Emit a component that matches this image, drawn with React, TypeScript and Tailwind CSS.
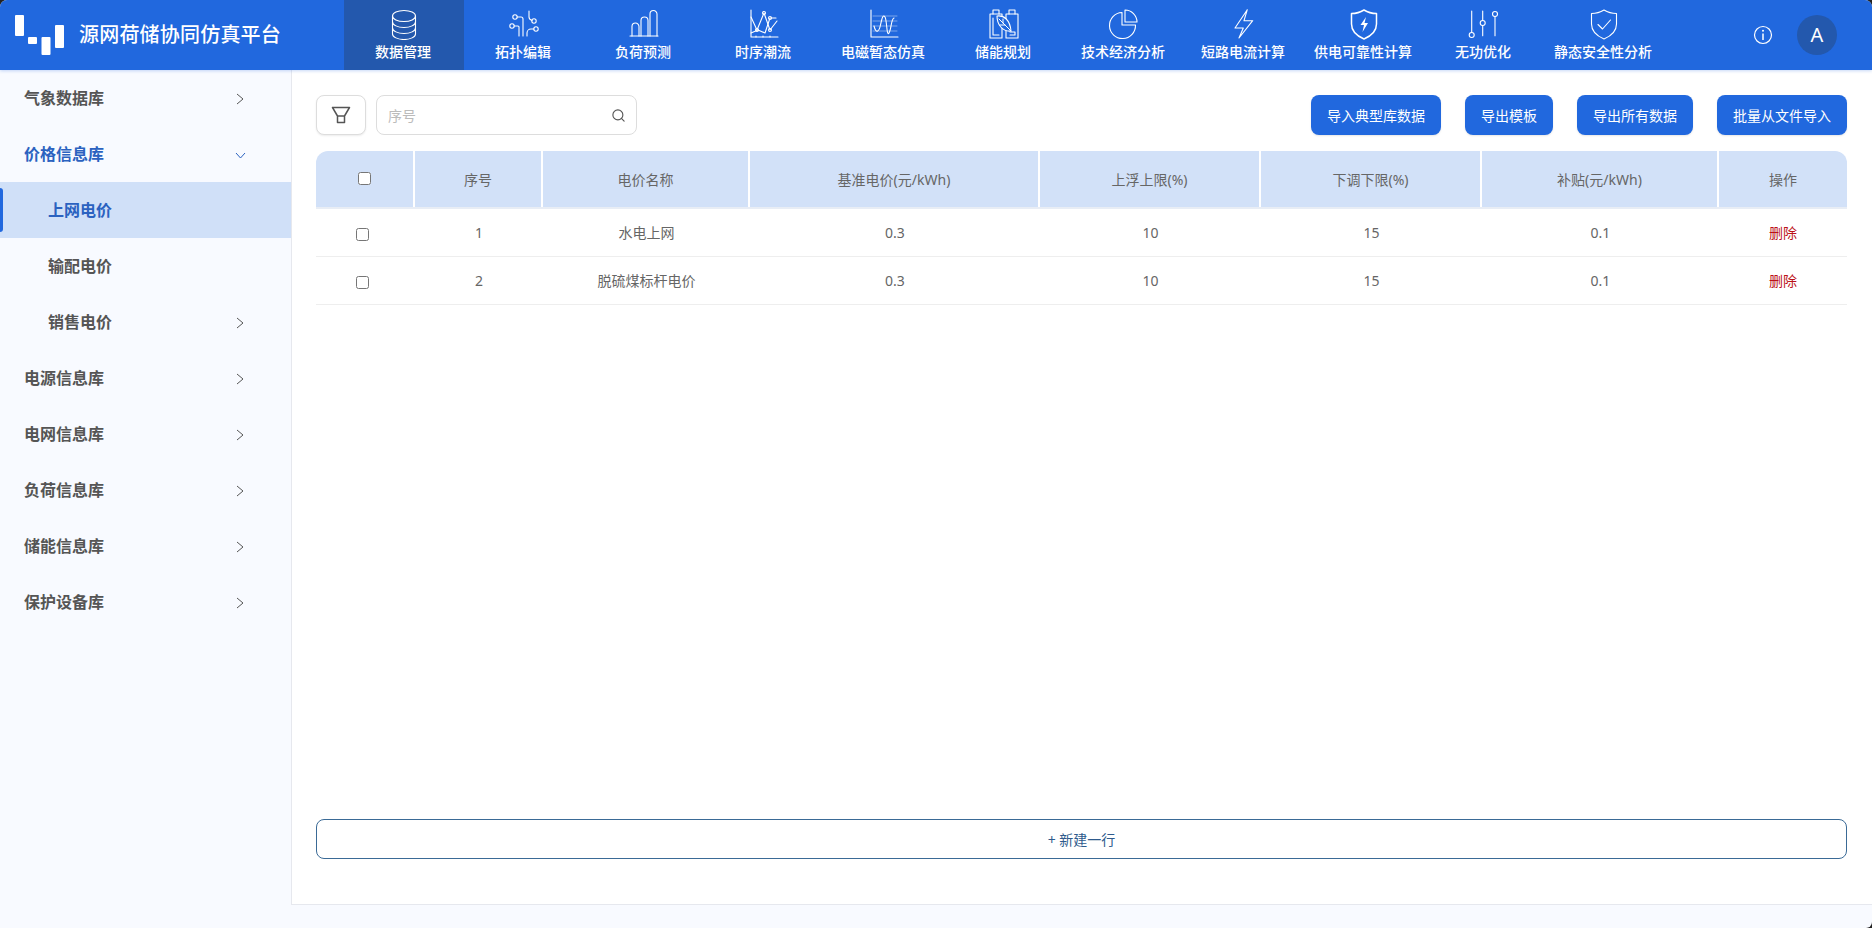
import { Search } from 'lucide-react';
import type { ReactNode } from 'react';

const BLUE = '#2168de';

function TabIcon({ children }: { children: ReactNode }) {
  return (
    <svg viewBox="0 0 32 32" className="h-[32px] w-[32px]" fill="none" stroke="white" strokeWidth="1.1" strokeLinecap="round" strokeLinejoin="round">
      {children}
    </svg>
  );
}

const tabs: { label: string; icon: ReactNode }[] = [
  {
    label: '数据管理',
    icon: (
      <>
        <ellipse cx="16" cy="8" rx="11.5" ry="5.5" />
        <path d="M4.5 8v18c0 3 5.2 5.5 11.5 5.5s11.500-2.500 11.500-5.500V8" />
        <path d="M4.500 14c0 3 5.200 5.500 11.500 5.500s11.500-2.500 11.500-5.500" />
        <path d="M4.500 20c0 3 5.200 5.500 11.500 5.500s11.500-2.500 11.500-5.500" />
      </>
    ),
  },
  {
    label: '拓扑编辑',
    icon: (
      <>
        <circle cx="7" cy="9" r="2.200" />
        <circle cx="4" cy="18" r="2.200" />
        <circle cx="26" cy="13" r="2.200" />
        <circle cx="28" cy="21" r="2.200" />
        <path d="M9.200 9H13c1.300 0 2 .8 2 2v17" />
        <path d="M6.200 18H10c.7 0 1 .4 1 1v9" />
        <path d="M21 3v6c0 2 1.500 3 3 3.500" />
        <path d="M25.800 21H23c-2.500 0-4 2-4 4v3" />
      </>
    ),
  },
  {
    label: '负荷预测',
    icon: (
      <>
        <path d="M2 28h28" />
        <path d="M4 28V18.500a3 3 0 0 1 7 0V28" />
        <path d="M13 28V12.500a3.500 3.500 0 0 1 7 0V28" />
        <path d="M22 28V6a3.500 3.500 0 0 1 7 0v22" />
      </>
    ),
  },
  {
    label: '时序潮流',
    icon: (
      <>
        <path d="M3 2v27h27" />
        <path d="M3 9l6 13 7-17 6 17 7-9" />
        <path d="M3 25l7-3 7 3 5-15h6" />
        <circle cx="9" cy="22" r="1.500" />
        <circle cx="16" cy="5" r="1.500" />
        <circle cx="22" cy="10" r="1.500" />
        <circle cx="22" cy="22" r="1.500" />
        <path d="M8 29v-1M15 29v-1M22 29v-1" />
      </>
    ),
  },
  {
    label: '电磁暂态仿真',
    icon: (
      <>
        <path d="M3 2v27h27" />
        <path d="M5 8h24M5 13h24M5 18h24M5 23h24" strokeOpacity="0.5" strokeWidth="0.8" />
        <path d="M6 18c2 8 5 6 6.500-1s2.500-11 4.500-8 1.500 20 4 16 2-14 5-15" />
      </>
    ),
  },
  {
    label: '储能规划',
    icon: (
      <>
        <path d="M5 6V2h6v4M21 6V2h6v4" />
        <rect x="2" y="6" width="12" height="24" />
        <rect x="18" y="6" width="12" height="24" />
        <path d="M5 10v17h6M22 24h5v3h-5" />
        <path d="M9 8c7-1 13 4 14 15-8 1-14-6-14-15z" fill={BLUE} />
        <path d="M11 11l12 12M15 15v-4M17 17h-5" strokeWidth="1" />
      </>
    ),
  },
  {
    label: '技术经济分析',
    icon: (
      <>
        <path d="M17 2a12 12 0 0 1 12 12H17z" />
        <path d="M14 4.500A13 13 0 1 0 27.500 17H14z" />
      </>
    ),
  },
  {
    label: '短路电流计算',
    icon: <path d="M19.300 1.700L7 20h8.300L11 30l13.700-17.300H16z" />,
  },
  {
    label: '供电可靠性计算',
    icon: (
      <>
        <path d="M16 2c4 2.500 8 3.500 12.500 3.500V16c0 7.500-5.500 12-12.500 15-7-3-12.500-7.500-12.500-15V5.500C8 5.500 12 4.500 16 2z" strokeWidth="1.500" />
        <path d="M18 9l-5.500 8H16l-1.500 7 5.500-9h-3.500z" fill="white" stroke="none" />
      </>
    ),
  },
  {
    label: '无功优化',
    icon: (
      <>
        <path d="M3.700 3v21.500" />
        <circle cx="3.700" cy="27" r="2.500" />
        <path d="M14.700 3v9.500M14.700 17.500v10.200" />
        <circle cx="14.700" cy="15" r="2.500" />
        <path d="M27 8.500v19.200" />
        <circle cx="27" cy="6" r="2.500" />
      </>
    ),
  },
  {
    label: '静态安全性分析',
    icon: (
      <>
        <path d="M16 2c4 2.500 8 3.500 12.500 3.500V16c0 7.500-5.500 12-12.500 15-7-3-12.500-7.500-12.500-15V5.500C8 5.500 12 4.500 16 2z" />
        <path d="M10 16.500l4.500 4.500 8-9" />
      </>
    ),
  },
];

function Chevron() {
  return (
    <svg width="8" height="12" viewBox="0 0 8 12" fill="none" stroke="#555" strokeWidth="1" className="mt-[2px]">
      <path d="M1 1l6 5-6 5" />
    </svg>
  );
}

function SideItem({ label, sub, arrow = true }: { label: string; sub?: boolean; arrow?: boolean }) {
  return (
    <div className={`flex h-[56px] items-center justify-between pr-[47px] text-[16px] font-semibold text-[#555] ${sub ? 'pl-[48px]' : 'pl-[24px]'}`}>
      <span>{label}</span>
      {arrow && <Chevron />}
    </div>
  );
}

const columns = ['序号', '电价名称', '基准电价(元/kWh)', '上浮上限(%)', '下调下限(%)', '补贴(元/kWh)', '操作'];
const rows = [
  ['1', '水电上网', '0.3', '10', '15', '0.1'],
  ['2', '脱硫煤标杆电价', '0.3', '10', '15', '0.1'],
];
const actions = ['导入典型库数据', '导出模板', '导出所有数据', '批量从文件导入'];
const gridCols = 'grid grid-cols-[99px_128px_207px_290px_221px_221px_237px_128px]';

export default function App() {
  return (
    <div className="h-[928px] w-full overflow-hidden bg-[#222] text-[14px]" style={{ fontFamily: '"Noto Sans", "Noto Sans CJK SC", sans-serif' }}>
      <div className="flex h-full flex-col overflow-hidden rounded-tl-[7px] rounded-tr-[7px] rounded-br-[6px] bg-[#f8faff]">
        {/* Header */}
        <header className="relative flex h-[70px] shrink-0 items-stretch bg-[#2168de] text-white shadow-[0_1px_3px_rgba(33,104,222,0.25)]">
          <div className="flex w-[344px] items-center">
            <svg width="50" height="41" viewBox="0 0 50 41" fill="white" className="ml-[15px] mt-[1px]">
              <rect x="0" y="0" width="9" height="21" rx="1" />
              <rect x="13" y="22" width="9" height="7" rx="1" />
              <rect x="26.500" y="22" width="9" height="18" rx="1" />
              <rect x="40" y="10" width="9" height="23" rx="1" />
            </svg>
            <span className="ml-[14px] text-[20px] font-medium tracking-[0.2px]">源网荷储协同仿真平台</span>
          </div>
          {tabs.map((tab, i) => (
            <div key={tab.label} className={`flex w-[120px] flex-col items-center pt-[8px] ${i === 0 ? 'bg-[#2358ad]' : ''}`}>
              <TabIcon>{tab.icon}</TabIcon>
              <span className="mr-[2px] mt-[2px] text-[14px] leading-[20px] font-medium whitespace-nowrap">{tab.label}</span>
            </div>
          ))}
          <div className="flex flex-1 items-center justify-end gap-[24px] pr-[35px]">
            <svg width="20" height="20" viewBox="0 0 20 20" fill="none" stroke="white" strokeWidth="1.200">
              <circle cx="10" cy="10" r="8.500" />
              <path d="M10 8.500V15" strokeWidth="1.500" />
              <circle cx="10" cy="5.800" r="1" fill="white" stroke="none" />
            </svg>
            <div className="flex h-[40px] w-[40px] items-center justify-center rounded-full bg-[#2358ad] text-[20px]">A</div>
          </div>
        </header>

        <div className="flex min-h-0 flex-1">
          {/* Sidebar */}
          <aside className="w-[291px] shrink-0">
            <SideItem label="气象数据库" />
            <div className="flex h-[56px] items-center justify-between pl-[24px] pr-[45px] text-[16px] font-semibold text-[#2b62c0]">
              <span>价格信息库</span>
              <svg width="11" height="7" viewBox="0 0 11 7" fill="none" stroke="#2b62c0" strokeWidth="1" className="mt-[3px]">
                <path d="M1 1l4.500 5L10 1" />
              </svg>
            </div>
            <div className="relative flex h-[56px] items-center bg-[#d0e0f8] pl-[48px] text-[16px] font-semibold text-[#2b62c0]">
              <div className="absolute left-0 top-[6px] h-[44px] w-[3px] rounded-r-sm bg-[#2168de]" />
              上网电价
            </div>
            <SideItem label="输配电价" sub arrow={false} />
            <SideItem label="销售电价" sub />
            <SideItem label="电源信息库" />
            <SideItem label="电网信息库" />
            <SideItem label="负荷信息库" />
            <SideItem label="储能信息库" />
            <SideItem label="保护设备库" />
          </aside>

          {/* Main panel */}
          <div className="flex min-w-0 flex-1 flex-col pb-[23px]">
            <main className="flex min-h-0 flex-1 flex-col border-b border-l border-[#e6e8ee] bg-white pb-[45px] pl-[24px] pr-[25px] pt-[25px]">
              <div className="flex items-center justify-between">
                <div className="flex items-center gap-[10px]">
                  <button className="flex h-[40px] w-[50px] items-center justify-center rounded-[8px] border border-[#ddd] bg-white shadow-[0_1px_2px_rgba(0,0,0,0.08)]">
                    <svg width="20" height="18" viewBox="0 0 20 18" fill="none" stroke="#555" strokeWidth="1.500" strokeLinejoin="round">
                      <path d="M1.500 1.500h17L13.500 10v6.500h-7V10zM6.500 10h7" />
                    </svg>
                  </button>
                  <div className="flex h-[40px] w-[261px] items-center justify-between rounded-[8px] border border-[#ddd] pl-[11px] pr-[10px]">
                    <span className="text-[#bbb]">序号</span>
                    <Search size={15} color="#555" strokeWidth={1.8} />
                  </div>
                </div>
                <div className="flex gap-[24px]">
                  {actions.map((a) => (
                    <button key={a} className="h-[40px] rounded-[8px] bg-[#2168de] px-[16px] text-[14px] text-white shadow-[0_1px_2px_rgba(0,0,0,0.1)]">
                      {a}
                    </button>
                  ))}
                </div>
              </div>

              <div className="mt-[16px]">
                <div className={`${gridCols} h-[58px] overflow-hidden rounded-t-[12px] border-b-2 border-[#e8edf5] bg-[#d2e1f8] text-[#666]`}>
                  <div className="flex items-center justify-center border-r-2 border-white pb-[2px]">
                    <input type="checkbox" />
                  </div>
                  {columns.map((c, i) => (
                    <div key={c} className={`flex items-center justify-center border-white ${i < columns.length - 1 ? 'border-r-2' : ''}`}>
                      {c}
                    </div>
                  ))}
                </div>
                {rows.map((row) => (
                  <div key={row[0]} className={`${gridCols} h-[48px] border-b border-[#eee] text-[#666]`}>
                    <div className="flex items-center justify-center pr-[6px] pt-[4px]">
                      <input type="checkbox" />
                    </div>
                    {row.map((cell, i) => (
                      <div key={i} className="flex items-center justify-center">
                        {cell}
                      </div>
                    ))}
                    <div className="flex items-center justify-center text-[#bb1118]">删除</div>
                  </div>
                ))}
              </div>

              <button className="mt-auto h-[40px] w-full rounded-[8px] border border-[#3a6a96] text-[14px] text-[#2e5a8c]">
                + 新建一行
              </button>
            </main>
          </div>
        </div>
      </div>
    </div>
  );
}
